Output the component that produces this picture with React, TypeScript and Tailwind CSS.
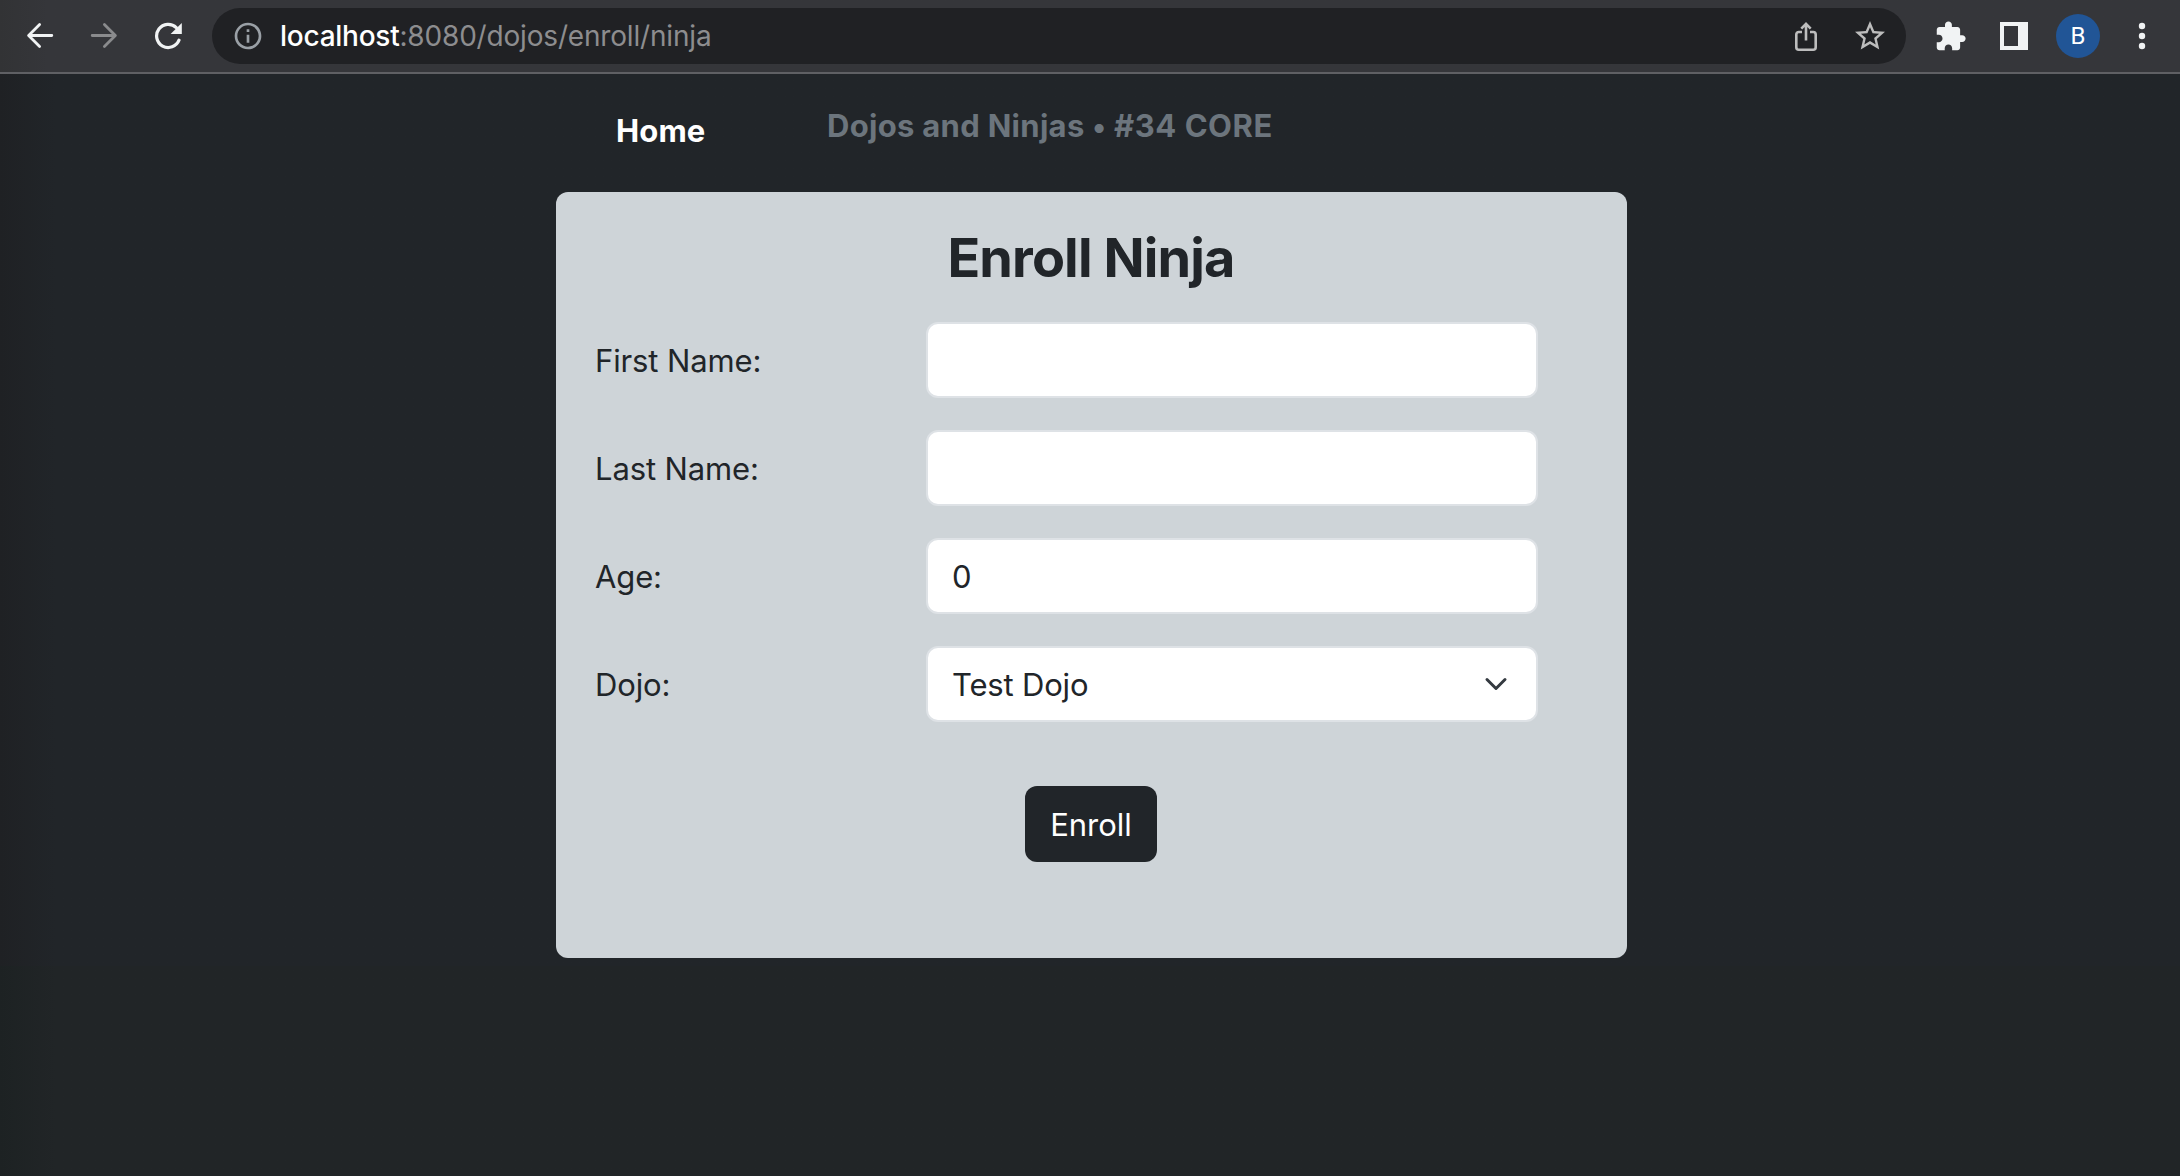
import type { ReactNode } from "react";

function BackIcon() {
  return (
    <svg width="28" height="28" viewBox="0 0 28 28" fill="none" stroke="#f1f3f4" strokeWidth="2.8" strokeLinecap="round" strokeLinejoin="round">
      <path d="M25.8 13.5H3M13.6 2.5L2.6 13.5l11 11" />
    </svg>
  );
}

function ForwardIcon() {
  return (
    <svg width="28" height="28" viewBox="0 0 28 28" fill="none" stroke="#8a8b8d" strokeWidth="2.8" strokeLinecap="round" strokeLinejoin="round">
      <path d="M2.2 13.5H25M14.4 2.5l11 11-11 11" />
    </svg>
  );
}

function ReloadIcon() {
  return (
    <svg width="28" height="28" viewBox="0 0 28 28" fill="none">
      <path d="M25 18.2A11.6 11.6 0 1 1 22.3 5.6" stroke="#f1f3f4" strokeWidth="3.2" strokeLinecap="round" />
      <path d="M27.8 1v10.9H16.6z" fill="#f1f3f4" />
    </svg>
  );
}

function InfoIcon() {
  return (
    <svg width="32" height="32" viewBox="0 0 24 24" fill="#9aa0a6">
      <path d="M11 7h2v2h-2zm0 4h2v6h-2zm1-9C6.48 2 2 6.48 2 12s4.48 10 10 10 10-4.48 10-10S17.52 2 12 2zm0 18c-4.41 0-8-3.59-8-8s3.59-8 8-8 8 3.59 8 8-3.59 8-8 8z" />
    </svg>
  );
}

function ShareIcon() {
  return (
    <svg width="24" height="32" viewBox="0 0 24 32" fill="none" stroke="#bdbdbd" strokeWidth="2.6">
      <path d="M8 12H4.8a2.5 2.5 0 0 0-2.5 2.5v12.7a2.5 2.5 0 0 0 2.5 2.5h14.4a2.5 2.5 0 0 0 2.5-2.5V14.5a2.5 2.5 0 0 0-2.5-2.5H16" />
      <path d="M12 20.5V4.5M7.3 8.6L12 3.9l4.7 4.7" />
    </svg>
  );
}

function StarIcon() {
  return (
    <svg width="36" height="36" viewBox="0 0 24 24" fill="#bdbdbd">
      <path d="M22 9.24l-7.19-.62L12 2 9.19 8.63 2 9.24l5.46 4.73L5.82 21 12 17.27 18.18 21l-1.63-7.03L22 9.24zM12 15.4l-3.76 2.27 1-4.28-3.32-2.88 4.38-.38L12 6.1l1.71 4.04 4.38.38-3.32 2.88 1 4.28L12 15.4z" />
    </svg>
  );
}

function PuzzleIcon() {
  return (
    <svg width="33" height="33" viewBox="0 0 24 24" fill="#f1f3f4">
      <path d="M20.5 11H19V7c0-1.1-.9-2-2-2h-4V3.5C13 2.12 11.88 1 10.5 1S8 2.12 8 3.5V5H4c-1.1 0-1.99.9-1.99 2v3.8H3.5c1.49 0 2.7 1.21 2.7 2.7s-1.21 2.7-2.7 2.7H2V20c0 1.1.9 2 2 2h3.8v-1.5c0-1.49 1.21-2.7 2.7-2.7 1.49 0 2.7 1.21 2.7 2.7V22H17c1.1 0 2-.9 2-2v-4h1.5c1.38 0 2.5-1.12 2.5-2.5S21.88 11 20.5 11z" />
    </svg>
  );
}

function SidePanelIcon() {
  return (
    <svg width="28" height="28" viewBox="0 0 28 28" fill="#f1f3f4">
      <path fillRule="evenodd" d="M0 0h28v28H0zM4 4v20h14V4z" />
    </svg>
  );
}

function MenuIcon() {
  return (
    <svg width="8" height="28" viewBox="0 0 8 28" fill="#f1f3f4">
      <circle cx="4" cy="4" r="3.2" />
      <circle cx="4" cy="14" r="3.2" />
      <circle cx="4" cy="24" r="3.2" />
    </svg>
  );
}

function Toolbar() {
  return (
    <header className="flex h-[74px] items-center border-b-2 border-[#5f6064] bg-[#35363a] bg-linear-to-r from-[#323335] to-[#35363a] to-[48px] pl-[26px]">
      <nav className="flex gap-9">
        <BackIcon />
        <ForwardIcon />
        <ReloadIcon />
      </nav>
      <div className="ml-[30px] flex h-14 w-[1694px] items-center rounded-full bg-[#202124] pr-[18px] pl-5">
        <InfoIcon />
        <p className="ml-4 flex-1 text-[28px] leading-8 text-[#8d8d8f]">
          <span className="font-[450] tracking-[-0.25px] text-white">localhost</span>
          <span className="tracking-[-0.18px]">:8080/dojos/enroll/ninja</span>
        </p>
        <ShareIcon />
        <span className="ml-[34px]">
          <StarIcon />
        </span>
      </div>
      <div className="ml-7">
        <PuzzleIcon />
      </div>
      <div className="ml-[33px]">
        <SidePanelIcon />
      </div>
      <div className="ml-7 flex size-11 items-center justify-center rounded-full bg-[#215596] font-['Roboto',sans-serif] text-2xl text-white">
        B
      </div>
      <div className="ml-[38px]">
        <MenuIcon />
      </div>
    </header>
  );
}

function Row({ label, children }: { label: string; children: ReactNode }) {
  return (
    <div className="flex h-[76px] items-center">
      <label className="w-[331px] pt-0.5 tracking-[-0.12px]">{label}</label>
      <div className="flex h-full w-[612px] items-center justify-between rounded-[12px] border-2 border-[#dee2e6] bg-white pr-7 pl-6 tracking-[-0.18px]">
        {children}
      </div>
    </div>
  );
}

function Chevron() {
  return (
    <svg width="24" height="24" viewBox="0 0 16 16" fill="none" stroke="#343a40" strokeWidth="2" strokeLinecap="round" strokeLinejoin="round">
      <path d="m2 5 6 6 6-6" />
    </svg>
  );
}

export default function App() {
  return (
    <div className="flex h-[1176px] w-[2180px] flex-col overflow-hidden bg-[#212529] font-['Inter',sans-serif] text-[31px] leading-[48px] text-[#212529]">
      <Toolbar />
      <main className="flex h-[892px] flex-col bg-linear-to-r from-[#1f2124] to-[#212529] to-[56px] pl-[556px]">
        <div className="flex h-[118px] items-start pl-15 font-bold">
          <a className="mt-[33px] w-[211px] tracking-[0.11px] text-white">Home</a>
          <h2 className="mt-7 tracking-[0.3px] text-[#6c757d]">
            Dojos and Ninjas <span className="text-[29px]">•</span> <span className="tracking-[0.56px]">#34 CORE</span>
          </h2>
        </div>
        <section className="flex h-[766px] w-[1071px] shrink-0 flex-col rounded-[12px] bg-[#ced4d8] pt-8 pr-10 pl-[39px]">
          <h1 className="h-[68px] text-center text-[54px] leading-[68px] font-bold tracking-[-0.874px]">Enroll Ninja</h1>
          <form className="mt-[30px] flex flex-col gap-8">
            <Row label="First Name:">{null}</Row>
            <Row label="Last Name:">{null}</Row>
            <Row label="Age:">
              <span className="pt-0.5">0</span>
            </Row>
            <Row label="Dojo:">
              <span className="pt-0.5">Test Dojo</span>
              <Chevron />
            </Row>
            <button type="button" className="mt-8 ml-[430px] h-[76px] w-[132px] rounded-[12px] bg-[#212529] pt-0.5 text-white">
              Enroll
            </button>
          </form>
        </section>
      </main>
      <div className="flex-1 bg-linear-to-r from-[#1d2223] to-[#212527] to-[56px]" />
    </div>
  );
}
